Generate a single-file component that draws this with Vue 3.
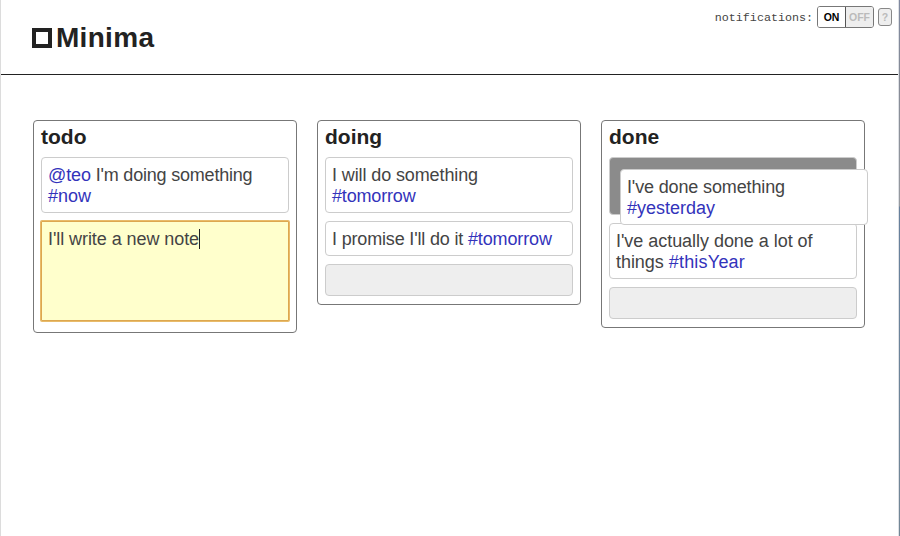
<script setup>
// ls: tracking of each run of text, in pixels
const columns = [
  {
    title: 'todo',
    notes: [
      { parts: [{ t: '@teo', tag: true, ls: -0.1 }, { t: " I'm doing something ", ls: -0.2 }, { t: '#now', tag: true, ls: 0 }] },
      { kind: 'editing', parts: [{ t: "I'll write a new note", ls: -0.07 }] },
    ],
  },
  {
    title: 'doing',
    notes: [
      { parts: [{ t: 'I will do something ', ls: -0.11 }, { t: '#tomorrow', tag: true, ls: -0.17 }] },
      { parts: [{ t: "I promise I'll do it ", ls: -0.17 }, { t: '#tomorrow', tag: true, ls: -0.12 }] },
      { kind: 'empty', parts: [] },
    ],
  },
  {
    title: 'done',
    notes: [
      { kind: 'slot', parts: [], dragged: [{ t: "I've done something ", ls: -0.14 }, { t: '#yesterday', tag: true, ls: 0 }] },
      { parts: [{ t: "I've actually done a lot of ", ls: -0.04 }, { t: 'things ', ls: -0.05 }, { t: '#thisYear', tag: true, ls: 0.22 }] },
      { kind: 'empty', parts: [] },
    ],
  },
]
</script>

<template>
  <div class="page">
    <header class="header">
      <h1 class="brand"><span class="logo"></span>Minima</h1>
      <div class="settings">
        <span class="label">notifications:</span>
        <div class="toggle"><button class="on">ON</button><button class="off">OFF</button></div>
        <button class="help">?</button>
      </div>
    </header>
    <main class="board">
      <section v-for="col in columns" :key="col.title" class="column">
        <h2>{{ col.title }}</h2>
        <div v-for="(note, i) in col.notes" :key="i" class="note" :class="note.kind">
          <span v-for="(p, j) in note.parts" :key="j" :class="{ tag: p.tag }" :style="{ letterSpacing: p.ls + 'px' }">{{ p.t }}</span>
          <i v-if="note.kind === 'editing'" class="caret"></i>
          <div v-if="note.dragged" class="note dragged">
            <span v-for="(p, j) in note.dragged" :key="j" :class="{ tag: p.tag }" :style="{ letterSpacing: p.ls + 'px' }">{{ p.t }}</span>
          </div>
        </div>
      </section>
    </main>
  </div>
</template>

<style>
body {
  margin: 0;
  background: #fff;
}
</style>

<style scoped>
.page {
  box-sizing: border-box;
  height: 536px;
  overflow: hidden;
  border-left: 1px solid #dcdcdc;
  padding-right: 2px;
  background:
    linear-gradient(#8089a0 0, #868b96 80px, #969aa0 206px, #67809c 207px, #738796 100%) right / 1px 100% no-repeat,
    linear-gradient(#dfe1e5, #dfe1e5) right 1px top / 1px 100% no-repeat,
    #fff;
  font-family: "Liberation Sans", Arial, sans-serif;
  color: #444;
}
.header {
  box-sizing: border-box;
  height: 75px;
  border-bottom: 1px solid #222;
  display: flex;
  justify-content: space-between;
  align-items: flex-start;
}
.brand {
  margin: 0;
  padding: 21px 0 0 31px;
  display: flex;
  align-items: center;
  gap: 4px;
  font-size: 28px;
  line-height: 33px;
  letter-spacing: 0.3px;
  color: #222;
}
.logo {
  box-sizing: border-box;
  width: 20px;
  height: 20px;
  border: 4px solid #222;
  margin-top: 1px;
}
.settings {
  display: flex;
  align-items: center;
  padding: 6px 6px 0 0;
}
.label {
  font: 11.7px/16px "Courier New", "Liberation Mono", monospace;
  padding-top: 1px;
  margin-right: 4px;
}
.toggle {
  display: flex;
  box-sizing: border-box;
  width: 57px;
  height: 22px;
  border: 1px solid #777;
  border-radius: 3px;
  overflow: hidden;
}
button {
  box-sizing: border-box;
  border: 0;
  margin: 0;
  padding: 0;
  font: bold 10.5px/20px "Liberation Sans", Arial, sans-serif;
  text-align: center;
  background: #eee;
  color: #bbb;
}
.on {
  width: 28px;
  border-right: 1px solid #555;
  background: #fff;
  color: #000;
}
.off {
  width: 27px;
}
.help {
  width: 14px;
  height: 18px;
  margin-left: 4px;
  border: 1px solid #888;
  border-radius: 3px;
  line-height: 16px;
}
.board {
  display: flex;
  align-items: flex-start;
  gap: 20px;
  padding: 45px 0 0 32px;
}
.column {
  flex: none;
  box-sizing: border-box;
  width: 264px;
  padding: 0 7px 8px;
  border: 1px solid #777;
  border-radius: 4px;
}
h2 {
  margin: 0;
  padding-top: 4px;
  height: 32px;
  font-size: 21px;
  line-height: 24px;
  color: #222;
}
.note {
  box-sizing: border-box;
  min-height: 32px;
  padding: 7px 6px 5px;
  border: 1px solid #ccc;
  border-radius: 4px;
  background: #fff;
  font-size: 18px;
  line-height: 21px;
  white-space: pre-wrap;
}
.note + .note {
  margin-top: 8px;
}
.tag {
  color: #33b;
}
.empty {
  background: #eee;
}
.editing {
  height: 100px;
  margin-bottom: 3px;
  border-color: #dda74f;
  border-radius: 1px;
  box-shadow: 0 0 0 1px #e8bb6a;
  background: #ffc;
}
.caret {
  display: inline-block;
  width: 1px;
  height: 20px;
  margin: 0 0 -4px;
  vertical-align: baseline;
  background: #222;
}
.slot {
  position: relative;
  height: 58px;
  background: #8b8b8b;
}
.dragged {
  position: absolute;
  left: 10px;
  top: 11px;
  width: 248px;
  z-index: 1;
}
</style>
